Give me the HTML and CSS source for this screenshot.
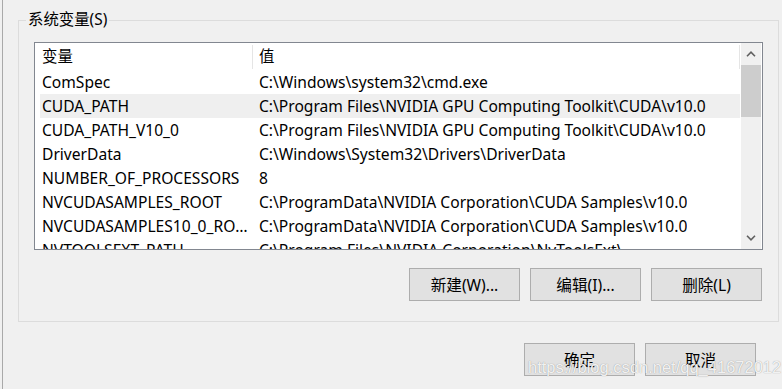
FILE: index.html
```html
<!DOCTYPE html>
<html>
<head>
    <title>系统变量</title>
    <link rel="stylesheet" href="styles.css">
</head>
<body>
    <div class="edge"></div>
    <div class="dialog">
        <fieldset class="group">
            <legend>系统变量(S)</legend>
            <div class="list">
                <div class="list-body">
                    <div class="list-head">
                        <div class="head-name">变量</div>
                        <div class="head-value">值</div>
                    </div>
                    <div class="row">
                        <div class="col-name">ComSpec</div>
                        <div class="col-value">C:\Windows\system32\cmd.exe</div>
                    </div>
                    <div class="row hover">
                        <div class="col-name">CUDA_PATH</div>
                        <div class="col-value">C:\Program Files\NVIDIA GPU Computing Toolkit\CUDA\v10.0</div>
                    </div>
                    <div class="row">
                        <div class="col-name">CUDA_PATH_V10_0</div>
                        <div class="col-value">C:\Program Files\NVIDIA GPU Computing Toolkit\CUDA\v10.0</div>
                    </div>
                    <div class="row">
                        <div class="col-name">DriverData</div>
                        <div class="col-value">C:\Windows\System32\Drivers\DriverData</div>
                    </div>
                    <div class="row">
                        <div class="col-name">NUMBER_OF_PROCESSORS</div>
                        <div class="col-value">8</div>
                    </div>
                    <div class="row">
                        <div class="col-name">NVCUDASAMPLES_ROOT</div>
                        <div class="col-value">C:\ProgramData\NVIDIA Corporation\CUDA Samples\v10.0</div>
                    </div>
                    <div class="row">
                        <div class="col-name">NVCUDASAMPLES10_0_ROOT</div>
                        <div class="col-value">C:\ProgramData\NVIDIA Corporation\CUDA Samples\v10.0</div>
                    </div>
                    <div class="row">
                        <div class="col-name">NVTOOLSEXT_PATH</div>
                        <div class="col-value">C:\Program Files\NVIDIA Corporation\NvToolsExt\</div>
                    </div>
                </div>
                <div class="scrollbar">
                    <div class="arrow">
                        <svg width="10" height="6" viewBox="0 0 10 6"><path d="M1 5.2 L5 1.2 L9 5.2" fill="none" stroke="#606060" stroke-width="1.6"/></svg>
                    </div>
                    <div class="thumb"></div>
                    <div class="track"></div>
                    <div class="arrow">
                        <svg width="10" height="6" viewBox="0 0 10 6"><path d="M1 0.8 L5 4.8 L9 0.8" fill="none" stroke="#606060" stroke-width="1.6"/></svg>
                    </div>
                </div>
            </div>
            <div class="group-actions">
                <button class="btn">新建(W)...</button>
                <button class="btn">编辑(I)...</button>
                <button class="btn">删除(L)</button>
            </div>
        </fieldset>
        <div class="dialog-actions">
            <button class="btn">确定</button>
            <button class="btn">取消</button>
        </div>
    </div>
    <div class="watermark">https://blog.csdn.net/qq_41672012</div>
</body>
</html>
```

FILE: styles.css
```css
html, body {
    margin: 0;
    height: 389px;
    overflow: hidden;
}
body {
    position: relative;
    display: flex;
    background-color: #f0f0f0;
    font-family: 'Noto Sans', 'Noto Sans CJK SC', sans-serif;
    font-size: 15.4px;
    color: #000;
}
.edge {
    width: 2px;
    flex: none;
    border-right: 1px solid #a9a9a9;
    background-color: #f0f0f0;
}
.dialog {
    display: flex;
    flex-direction: column;
    padding-left: 15px;
}
.group {
    width: 761px;
    box-sizing: border-box;
    margin: 12px 0 0 0;
    padding: 14px 15px 20px 15px;
    border: 1px solid #dcdcdc;
}
.group legend {
    margin-left: -8px;
    padding: 0 2px;
    line-height: 16px;
}
.list {
    display: flex;
    height: 208px;
    box-sizing: border-box;
    border: 1px solid #828790;
    background-color: #fff;
}
.list-body {
    flex: 1;
    overflow: hidden;
}
.list-head {
    display: flex;
    height: 27px;
}
.head-name,
.head-value {
    margin: 2px 0 1px 0;
    line-height: 24px;
    border-right: 1px solid #e5e5e5;
}
.head-name {
    width: 210px;
    padding-left: 7px;
}
.head-value {
    width: 480px;
    padding-left: 6px;
}
.row {
    display: flex;
    height: 24px;
    line-height: 24px;
    margin-left: 5px;
    width: 700px;
    white-space: nowrap;
    font-size: 15.6px;
}
.row.hover {
    background-color: #efefef;
}
.col-name {
    width: 208px;
    padding: 0 2px;
    overflow: hidden;
    text-overflow: ellipsis;
    flex: none;
}
.col-value {
    padding-left: 7px;
    overflow: hidden;
}
.scrollbar {
    width: 20px;
    flex: none;
    display: flex;
    flex-direction: column;
    background-color: #f0f0f0;
    margin-right: 1px;
}
.arrow {
    height: 22px;
    display: flex;
    align-items: center;
    justify-content: center;
}
.thumb {
    height: 52px;
    background-color: #cdcdcd;
}
.track {
    flex: 1;
}
.group-actions,
.dialog-actions {
    display: flex;
    justify-content: flex-end;
    gap: 10px;
}
.group-actions {
    margin-top: 18px;
    padding-right: 1px;
}
.dialog-actions {
    margin-top: 21px;
    padding-right: 23px;
}
.btn {
    width: 111px;
    height: 33px;
    border: 1px solid #adadad;
    background-color: #e1e1e1;
    font-family: 'Noto Sans', 'Noto Sans CJK SC', sans-serif;
    font-size: 15.6px;
    color: #000;
    padding: 0;
}
.watermark {
    position: absolute;
    left: 528px;
    top: 358px;
    font-family: 'Liberation Sans', sans-serif;
    font-size: 16.5px;
    color: rgba(255, 255, 255, 0.9);
    text-shadow: 0 0 1px rgba(110, 110, 110, 0.8);
    white-space: nowrap;
}
```
